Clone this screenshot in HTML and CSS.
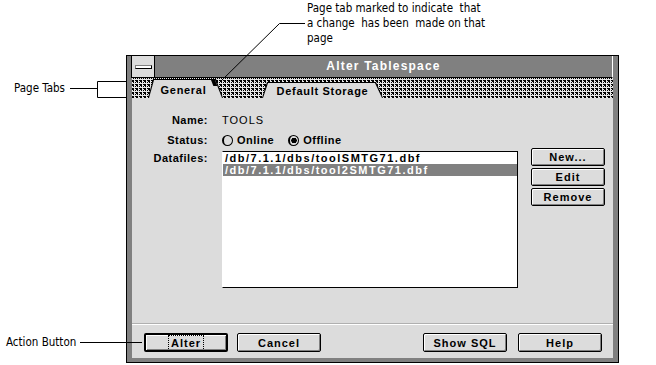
FILE: index.html
```html
<!DOCTYPE html>
<html lang="en">

<head>
  <meta charset="UTF-8">
  <title>Alter Tablespace</title>
  <link rel="stylesheet" href="styles.css">
</head>

<body>
  <div class="canvas">
    <div class="note note-tab">Page tab marked to indicate&nbsp; that<br>a change&nbsp; has been&nbsp; made on that<br>page</div>
    <div class="note note-tabs">Page Tabs</div>
    <div class="note note-action">Action Button</div>
    <svg class="leaders" width="656" height="365" viewBox="0 0 656 365">
      <path d="M305 23.5H279.5L220 82" fill="none" stroke="#000" stroke-width="1" />
      <path d="M70 88.5H97.5M127 81.5H97.5V97.5H127" fill="none" stroke="#000" stroke-width="1" />
      <path d="M80 342.5H142" fill="none" stroke="#000" stroke-width="1" />
    </svg>

    <div class="window">
      <div class="titlebar">
        <div class="sysmenu"><span class="sysbar"></span></div>
        <div class="title">Alter Tablespace</div>
      </div>
      <div class="tabstrip">
        <div class="tab tab-active">
          <div class="tab-face">General<span class="changed"></span></div>
        </div>
        <div class="tab tab-back">
          <div class="tab-face">Default Storage</div>
        </div>
      </div>
      <div class="page">
        <div class="form">
          <div class="label">Name:</div>
          <div class="value value-name">TOOLS</div>

          <div class="label">Status:</div>
          <div class="value radios">
            <label class="radio"><span class="dot"></span>Online</label>
            <label class="radio radio-on"><span class="dot"></span>Offline</label>
          </div>

          <div class="label">Datafiles:</div>
          <div class="listbox">
            <div class="item">/db/7.1.1/dbs/toolSMTG71.dbf</div>
            <div class="item item-selected">/db/7.1.1/dbs/tool2SMTG71.dbf</div>
          </div>
          <div class="side-buttons">
            <button class="btn">New...</button>
            <button class="btn">Edit</button>
            <button class="btn">Remove</button>
          </div>
        </div>
        <div class="actions">
          <button class="btn btn-default"><span class="focus">Alter</span></button>
          <button class="btn">Cancel</button>
          <button class="btn btn-push">Show SQL</button>
          <button class="btn">Help</button>
        </div>
      </div>
    </div>
  </div>
</body>

</html>
```

FILE: styles.css
```css
*,
*::before,
*::after {
  box-sizing: border-box;
}
body {
  margin: 0;
  background: #fff;
  color: #000;
  font-family: "Liberation Sans", Arial, sans-serif;
}
.canvas {
  position: relative;
  width: 656px;
  height: 365px;
  padding: 55px 0 0 126px;
}
.note {
  position: absolute;
  font-family: "Liberation Sans Narrow", "DejaVu Sans Condensed", sans-serif;
  font-size: 11.5px;
  line-height: 15px;
  white-space: nowrap;
}
.note-tab {
  left: 307px;
  top: 1px;
}
.note-tabs {
  left: 14px;
  top: 81px;
}
.note-action {
  left: 6px;
  top: 335px;
}
.leaders {
  position: absolute;
  left: 0;
  top: 0;
  pointer-events: none;
}

/* window frame */
.window {
  width: 493px;
  height: 308px;
  border: 1px solid #000;
  background: #808080;
  padding: 0 5px 4px;
  display: flex;
  flex-flow: column;
}
.titlebar {
  display: flex;
  height: 22px;
  border-bottom: 1px solid #000;
  border-right: 1px solid #fff;
  box-shadow: -1px 0 #000;
  background: #808080;
}
.sysmenu {
  width: 23px;
  display: flex;
  align-items: center;
  justify-content: center;
  background: #dcdcdc;
  border-right: 1px solid #000;
}
.sysbar {
  width: 17px;
  height: 4px;
  background: #fff;
  border: 1px solid #000;
  border-left-color: #808080;
  border-top-color: #808080;
}
.title {
  flex: 1;
  text-align: center;
  color: #fff;
  font-weight: bold;
  font-size: 12px;
  letter-spacing: 1.2px;
  line-height: 21px;
}

/* tabs */
.tabstrip {
  height: 20px;
  display: flex;
  align-items: flex-end;
  padding-left: 16px;
  gap: 39px;
  background-color: #e6e6e6;
  background-image:
    repeating-conic-gradient(#000 0 25%, transparent 0 100%),
    repeating-conic-gradient(transparent 0 50%, #000 0 75%, transparent 0 100%);
  background-size: 2px 2px, 4px 4px;
}
.tab {
  background: #000;
  padding: 1px 1px 0;
  font-weight: bold;
  font-size: 11px;
  letter-spacing: 0.7px;
}
.tab-face {
  position: relative;
  height: 100%;
  background: #dcdcdc;
  display: flex;
  align-items: center;
  justify-content: center;
}
.tab-active {
  width: 75px;
  height: 19px;
  clip-path: polygon(5px 0, calc(100% - 7px) 0, 100% 100%, 0 100%);
}
.tab-active .tab-face {
  clip-path: polygon(5px 0, calc(100% - 7px) 0, 100% 100%, 0 100%);
  padding: 1px 4px 0 0;
}
.tab-back {
  width: 121px;
  height: 16px;
  clip-path: polygon(5px 0, calc(100% - 7px) 0, 100% 100%, 0 100%);
}
.tab-back .tab-face {
  clip-path: polygon(5px 0, calc(100% - 7px) 0, 100% 100%, 0 100%);
  padding-top: 1px;
}
.changed {
  position: absolute;
  top: 0;
  right: 5px;
  width: 6px;
  height: 6px;
  background: #000;
  clip-path: polygon(0 0, 100% 0, 100% 100%, 40% 100%);
}

/* page body */
.page {
  flex: 1;
  background: #dcdcdc;
  display: flex;
  flex-flow: column;
}
.form {
  height: 226px;
  padding-top: 15px;
  display: grid;
  grid-template-columns: 76px 296px 73px;
  grid-template-rows: 20px 18px 137px;
  column-gap: 14px;
  align-items: start;
  font-size: 11px;
  font-weight: bold;
  letter-spacing: 0.5px;
  line-height: 14px;
}
.form > .label {
  text-align: right;
}
.form > .value {
  grid-column: span 2;
}
.value-name {
  font-weight: normal;
  letter-spacing: 1px;
}
.radios {
  display: flex;
  gap: 14px;
}
.radio {
  display: flex;
  align-items: center;
  gap: 4px;
}
.dot {
  width: 11px;
  height: 11px;
  border: 1px solid #000;
  border-left-width: 2px;
  border-radius: 50%;
  background: #dcdcdc;
}
.radio-on .dot {
  background: radial-gradient(circle, #000 0 2.5px, #dcdcdc 3px);
}
.listbox {
  height: 137px;
  background: #fff;
  border: 1px solid #000;
  border-left-color: #fff;
  font-size: 11px;
  letter-spacing: 1.5px;
  line-height: 12px;
}
.item {
  padding-left: 2px;
  height: 12px;
}
.item-selected {
  background: #808080;
  color: #fff;
}
.side-buttons {
  margin: -3px 0 0 -1px;
  display: flex;
  flex-flow: column;
  gap: 2px;
}
.btn {
  height: 18px;
  padding: 0;
  font-family: inherit;
  font-size: 11px;
  font-weight: bold;
  letter-spacing: 1px;
  color: #000;
  background: #dcdcdc;
  border: 1px solid #000;
  border-radius: 2px;
  box-shadow: inset 1px 1px #fff, inset -1px -1px #808080;
}

/* action row */
.actions {
  flex: 1;
  border-top: 1px solid #fff;
  box-shadow: 0 -1px #b0b0b0;
  padding: 8px 11px 0 12px;
  display: flex;
  gap: 9px;
}
.actions .btn {
  width: 84px;
  height: 19px;
}
.btn-default {
  border-width: 2px;
}
.focus {
  outline: 1px dotted #000;
  outline-offset: 1px;
  padding: 0 1px;
}
.btn-push {
  margin-left: auto;
}
.actions .btn-push + .btn {
  margin-left: 2px;
}
```
